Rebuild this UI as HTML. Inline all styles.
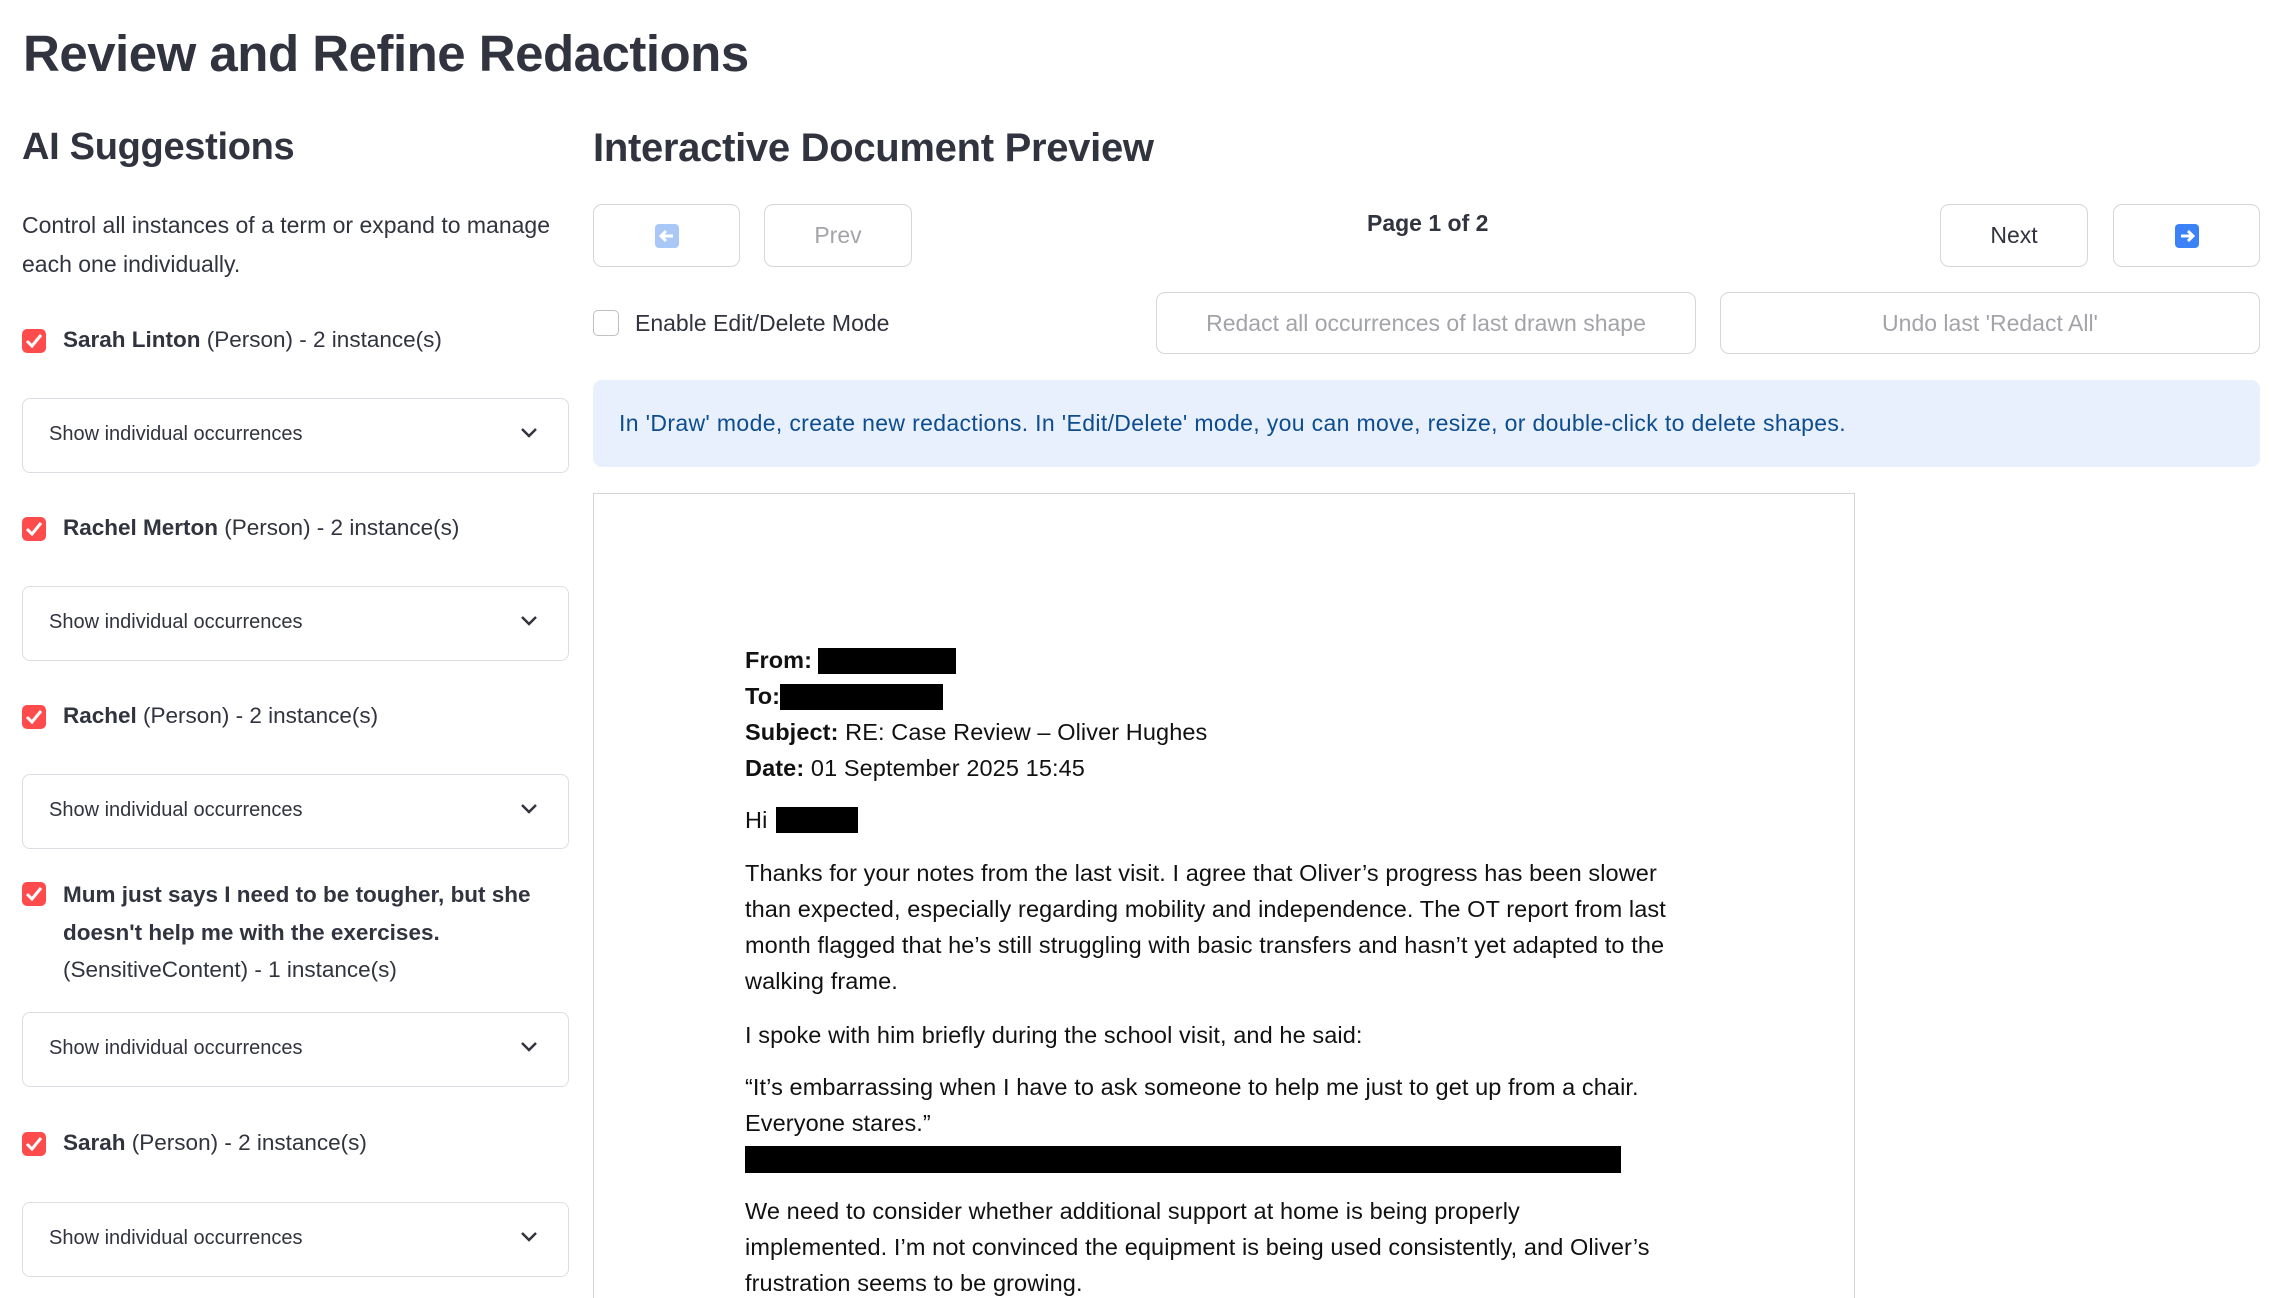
<!DOCTYPE html>
<html style="overflow:hidden;height:1298px"><head><meta charset="utf-8"><style>
*{box-sizing:border-box;margin:0;padding:0}
body{width:2269px;height:1298px;overflow:hidden;background:#fff;font-family:"Liberation Sans",sans-serif;color:#31333f;position:relative}
.a{position:absolute;white-space:nowrap}
h1{position:absolute;left:23px;top:24px;font-size:51px;font-weight:700;letter-spacing:-0.5px}
h2{position:absolute;font-size:40px;font-weight:700;letter-spacing:-0.3px}
.cb{position:absolute;width:24px;height:24px;background:#ff4b4b;border-radius:5px}
.cb svg{position:absolute;left:3px;top:4px}
.lbl{position:absolute;font-size:22.5px;color:#31333f}
.exp{position:absolute;left:22px;width:547px;height:75px;border:1.5px solid #dcdde2;border-radius:8px}
.exp span{position:absolute;left:26px;top:24px;font-size:20px}
.exp svg{position:absolute;right:30px;top:28px}
.btn{position:absolute;border:1.5px solid #d6d6d9;border-radius:9px;display:flex;align-items:center;justify-content:center;font-size:23px}
.ic{width:24px;height:24px;border-radius:4px;background:#3b82f6;position:relative}
.dt{position:absolute;left:745px;font-size:23.5px;color:#111;white-space:nowrap;letter-spacing:0.1px}
.rb{position:absolute;background:#000}
</style></head><body>
<h1>Review and Refine Redactions</h1>
<h2 style="left:22px;top:126px;font-size:38px">AI Suggestions</h2>
<h2 style="left:593px;top:126px">Interactive Document Preview</h2>

<div class="a" style="left:22px;top:206px;font-size:23px;line-height:39px;white-space:normal;width:570px">Control all instances of a term or expand to manage each one individually.</div>

<div class="cb" style="left:22px;top:329px"><svg width="18" height="16" viewBox="0 0 18 16"><path d="M2 8l5 5 9-11" stroke="#fff" stroke-width="3" fill="none"/></svg></div>
<div class="lbl" style="left:63px;top:327px"><b>Sarah Linton</b> (Person) - 2 instance(s)</div>
<div class="exp" style="top:398px"><span>Show individual occurrences</span><svg width="18" height="12" viewBox="0 0 18 12"><path d="M2 2l7 7 7-7" stroke="#31333f" stroke-width="2.5" fill="none"/></svg></div>

<div class="cb" style="left:22px;top:517px"><svg width="18" height="16" viewBox="0 0 18 16"><path d="M2 8l5 5 9-11" stroke="#fff" stroke-width="3" fill="none"/></svg></div>
<div class="lbl" style="left:63px;top:515px"><b>Rachel Merton</b> (Person) - 2 instance(s)</div>
<div class="exp" style="top:586px"><span>Show individual occurrences</span><svg width="18" height="12" viewBox="0 0 18 12"><path d="M2 2l7 7 7-7" stroke="#31333f" stroke-width="2.5" fill="none"/></svg></div>

<div class="cb" style="left:22px;top:705px"><svg width="18" height="16" viewBox="0 0 18 16"><path d="M2 8l5 5 9-11" stroke="#fff" stroke-width="3" fill="none"/></svg></div>
<div class="lbl" style="left:63px;top:703px"><b>Rachel</b> (Person) - 2 instance(s)</div>
<div class="exp" style="top:774px"><span>Show individual occurrences</span><svg width="18" height="12" viewBox="0 0 18 12"><path d="M2 2l7 7 7-7" stroke="#31333f" stroke-width="2.5" fill="none"/></svg></div>

<div class="cb" style="left:22px;top:882px"><svg width="18" height="16" viewBox="0 0 18 16"><path d="M2 8l5 5 9-11" stroke="#fff" stroke-width="3" fill="none"/></svg></div>
<div class="lbl" style="left:63px;top:876px;line-height:37.5px;white-space:nowrap"><b>Mum just says I need to be tougher, but she<br>doesn't help me with the exercises.</b><br>(SensitiveContent) - 1 instance(s)</div>
<div class="exp" style="top:1012px"><span>Show individual occurrences</span><svg width="18" height="12" viewBox="0 0 18 12"><path d="M2 2l7 7 7-7" stroke="#31333f" stroke-width="2.5" fill="none"/></svg></div>

<div class="cb" style="left:22px;top:1132px"><svg width="18" height="16" viewBox="0 0 18 16"><path d="M2 8l5 5 9-11" stroke="#fff" stroke-width="3" fill="none"/></svg></div>
<div class="lbl" style="left:63px;top:1130px"><b>Sarah</b> (Person) - 2 instance(s)</div>
<div class="exp" style="top:1202px"><span>Show individual occurrences</span><svg width="18" height="12" viewBox="0 0 18 12"><path d="M2 2l7 7 7-7" stroke="#31333f" stroke-width="2.5" fill="none"/></svg></div>

<!-- nav -->
<div class="btn" style="left:593px;top:204px;width:147px;height:63px"><div class="ic" style="background:#aac8f5"><svg width="24" height="24" viewBox="0 0 24 24" style="position:absolute;left:0;top:0"><path d="M18 12H7M11 7l-5 5 5 5" stroke="#fff" stroke-width="3" fill="none"/></svg></div></div>
<div class="btn" style="left:764px;top:204px;width:148px;height:63px;color:#a3a4a9">Prev</div>
<div class="a" style="left:1367px;top:210px;font-size:23px;font-weight:700">Page 1 of 2</div>
<div class="btn" style="left:1940px;top:204px;width:148px;height:63px">Next</div>
<div class="btn" style="left:2113px;top:204px;width:147px;height:63px"><div class="ic"><svg width="24" height="24" viewBox="0 0 24 24" style="position:absolute;left:0;top:0"><path d="M6 12h11M13 7l5 5-5 5" stroke="#fff" stroke-width="3" fill="none"/></svg></div></div>

<div style="position:absolute;left:593px;top:310px;width:26px;height:26px;border:1.5px solid #bfc0c5;border-radius:5px"></div>
<div class="a" style="left:635px;top:310px;font-size:23px">Enable Edit/Delete Mode</div>
<div class="btn" style="left:1156px;top:292px;width:540px;height:62px;color:#a3a4a9">Redact all occurrences of last drawn shape</div>
<div class="btn" style="left:1720px;top:292px;width:540px;height:62px;color:#a3a4a9">Undo last 'Redact All'</div>

<div style="position:absolute;left:593px;top:380px;width:1667px;height:87px;background:#e7f0fc;border-radius:9px"></div>
<div class="a" style="left:619px;top:410px;font-size:23px;letter-spacing:0.35px;color:#0d4c8f">In 'Draw' mode, create new redactions. In 'Edit/Delete' mode, you can move, resize, or double-click to delete shapes.</div>

<!-- document -->
<div style="position:absolute;left:593px;top:493px;width:1262px;height:805px;border:1.5px solid #d4d4d4;border-bottom:none"></div>
<div class="dt" style="top:647px"><b>From:</b></div><div class="rb" style="left:818px;top:648px;width:138px;height:26px"></div>
<div class="dt" style="top:683px"><b>To:</b></div><div class="rb" style="left:780px;top:684px;width:163px;height:26px"></div>
<div class="dt" style="top:719px"><b>Subject:</b> RE: Case Review – Oliver Hughes</div>
<div class="dt" style="top:755px"><b>Date:</b> 01 September 2025 15:45</div>
<div class="dt" style="top:807px">Hi</div><div class="rb" style="left:776px;top:807px;width:82px;height:26px"></div>
<div class="dt" style="top:860px">Thanks for your notes from the last visit. I agree that Oliver’s progress has been slower</div>
<div class="dt" style="top:896px">than expected, especially regarding mobility and independence. The OT report from last</div>
<div class="dt" style="top:932px">month flagged that he’s still struggling with basic transfers and hasn’t yet adapted to the</div>
<div class="dt" style="top:968px">walking frame.</div>
<div class="dt" style="top:1022px">I spoke with him briefly during the school visit, and he said:</div>
<div class="dt" style="top:1074px">“It’s embarrassing when I have to ask someone to help me just to get up from a chair.</div>
<div class="dt" style="top:1110px">Everyone stares.”</div>
<div class="rb" style="left:745px;top:1146px;width:876px;height:27px"></div>
<div class="dt" style="top:1198px">We need to consider whether additional support at home is being properly</div>
<div class="dt" style="top:1234px">implemented. I’m not convinced the equipment is being used consistently, and Oliver’s</div>
<div class="dt" style="top:1270px">frustration seems to be growing.</div>
</body></html>
